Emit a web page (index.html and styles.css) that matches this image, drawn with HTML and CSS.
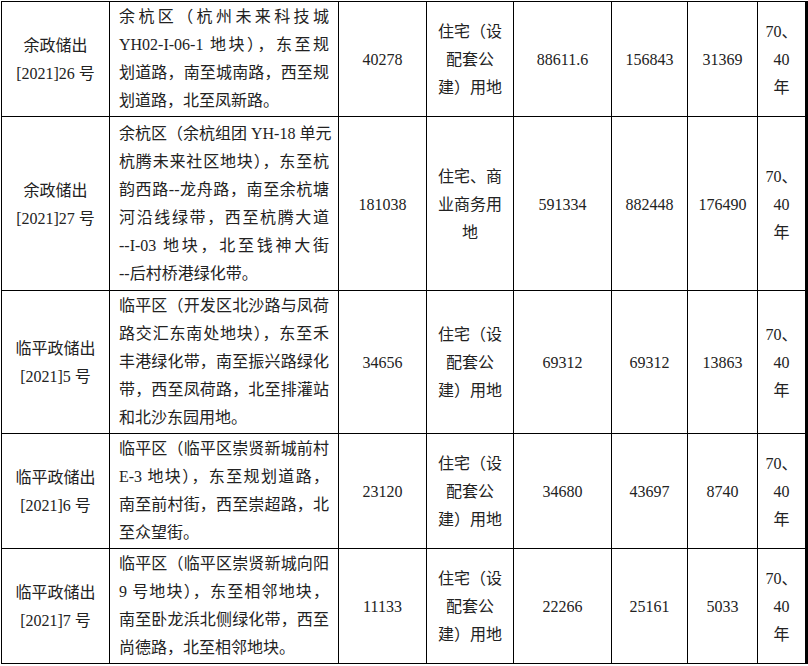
FILE: index.html
```html
<!DOCTYPE html>
<html lang="zh-CN">
<head>
<meta charset="utf-8">
<title>出让地块一览</title>
<link rel="stylesheet" href="styles.css">
</head>
<body>
<table class="land">
  <colgroup>
    <col class="c-no"><col class="c-loc"><col class="c-area"><col class="c-use">
    <col class="c-cap"><col class="c-floor"><col class="c-min"><col class="c-year">
  </colgroup>
  <tbody>
    <tr class="r4">
      <td>余政储出<br>[2021]26 号</td>
      <td class="loc">
        <div class="ln">余杭区（杭州未来科技城</div>
        <div class="ln">YH02-I-06-1 地块），东至规</div>
        <div class="ln">划道路，南至城南路，西至规</div>
        <div class="ln">划道路，北至凤新路。</div>
      </td>
      <td>40278</td>
      <td>住宅（设<br>配套公<br>建）用地</td>
      <td>88611.6</td>
      <td>156843</td>
      <td>31369</td>
      <td class="yr">70、<br>40<br>年</td>
    </tr>
    <tr class="r6">
      <td>余政储出<br>[2021]27 号</td>
      <td class="loc">
        <div class="ln">余杭区（余杭组团 YH-18 单元</div>
        <div class="ln">杭腾未来社区地块），东至杭</div>
        <div class="ln">韵西路--龙舟路，南至余杭塘</div>
        <div class="ln">河沿线绿带，西至杭腾大道</div>
        <div class="ln">--I-03 地块，北至钱神大街</div>
        <div class="ln">--后村桥港绿化带。</div>
      </td>
      <td>181038</td>
      <td>住宅、商<br>业商务用<br>地</td>
      <td>591334</td>
      <td>882448</td>
      <td>176490</td>
      <td class="yr">70、<br>40<br>年</td>
    </tr>
    <tr class="r5">
      <td>临平政储出<br>[2021]5 号</td>
      <td class="loc">
        <div class="ln">临平区（开发区北沙路与凤荷</div>
        <div class="ln">路交汇东南处地块），东至禾</div>
        <div class="ln">丰港绿化带，南至振兴路绿化</div>
        <div class="ln">带，西至凤荷路，北至排灌站</div>
        <div class="ln">和北沙东园用地。</div>
      </td>
      <td>34656</td>
      <td>住宅（设<br>配套公<br>建）用地</td>
      <td>69312</td>
      <td>69312</td>
      <td>13863</td>
      <td class="yr">70、<br>40<br>年</td>
    </tr>
    <tr class="r4">
      <td>临平政储出<br>[2021]6 号</td>
      <td class="loc">
        <div class="ln">临平区（临平区崇贤新城前村</div>
        <div class="ln">E-3 地块），东至规划道路，</div>
        <div class="ln">南至前村街，西至崇超路，北</div>
        <div class="ln">至众望街。</div>
      </td>
      <td>23120</td>
      <td>住宅（设<br>配套公<br>建）用地</td>
      <td>34680</td>
      <td>43697</td>
      <td>8740</td>
      <td class="yr">70、<br>40<br>年</td>
    </tr>
    <tr class="r4">
      <td>临平政储出<br>[2021]7 号</td>
      <td class="loc">
        <div class="ln">临平区（临平区崇贤新城向阳</div>
        <div class="ln">9 号地块），东至相邻地块，</div>
        <div class="ln">南至卧龙浜北侧绿化带，西至</div>
        <div class="ln">尚德路，北至相邻地块。</div>
      </td>
      <td>11133</td>
      <td>住宅（设<br>配套公<br>建）用地</td>
      <td>22266</td>
      <td>25161</td>
      <td>5033</td>
      <td class="yr">70、<br>40<br>年</td>
    </tr>
  </tbody>
</table>
</body>
</html>
```

FILE: styles.css
```css
html, body {
  margin: 0;
  padding: 0;
  background: #fff;
}

body {
  padding: 1px 0 0 1px;
  font-family: "Liberation Serif", "Noto Sans CJK SC", serif;
  font-size: 16px;
  color: #222;
}

.land {
  border-collapse: collapse;
  table-layout: fixed;
  width: 805px;
}

.c-no { width: 108px; }
.c-loc { width: 229px; }
.c-area { width: 88px; }
.c-use { width: 87px; }
.c-cap { width: 98px; }
.c-floor { width: 76px; }
.c-min { width: 70px; }
.c-year { width: 49px; }

.land td {
  border: 1px solid #000;
  padding: 2px 4px 0;
  text-align: center;
  vertical-align: middle;
  line-height: 28px;
}

.land td:last-child {
  border-right: 3px solid #000;
}

.r4 { height: 115px; }
.r6 { height: 174px; }
.r5 { height: 143px; }

.land td.loc {
  padding: 0 9px;
  text-align: left;
}

.ln {
  white-space: nowrap;
  text-align: justify;
  text-align-last: justify;
  text-justify: inter-character;
}

.ln:last-child {
  text-align-last: auto;
}
```
